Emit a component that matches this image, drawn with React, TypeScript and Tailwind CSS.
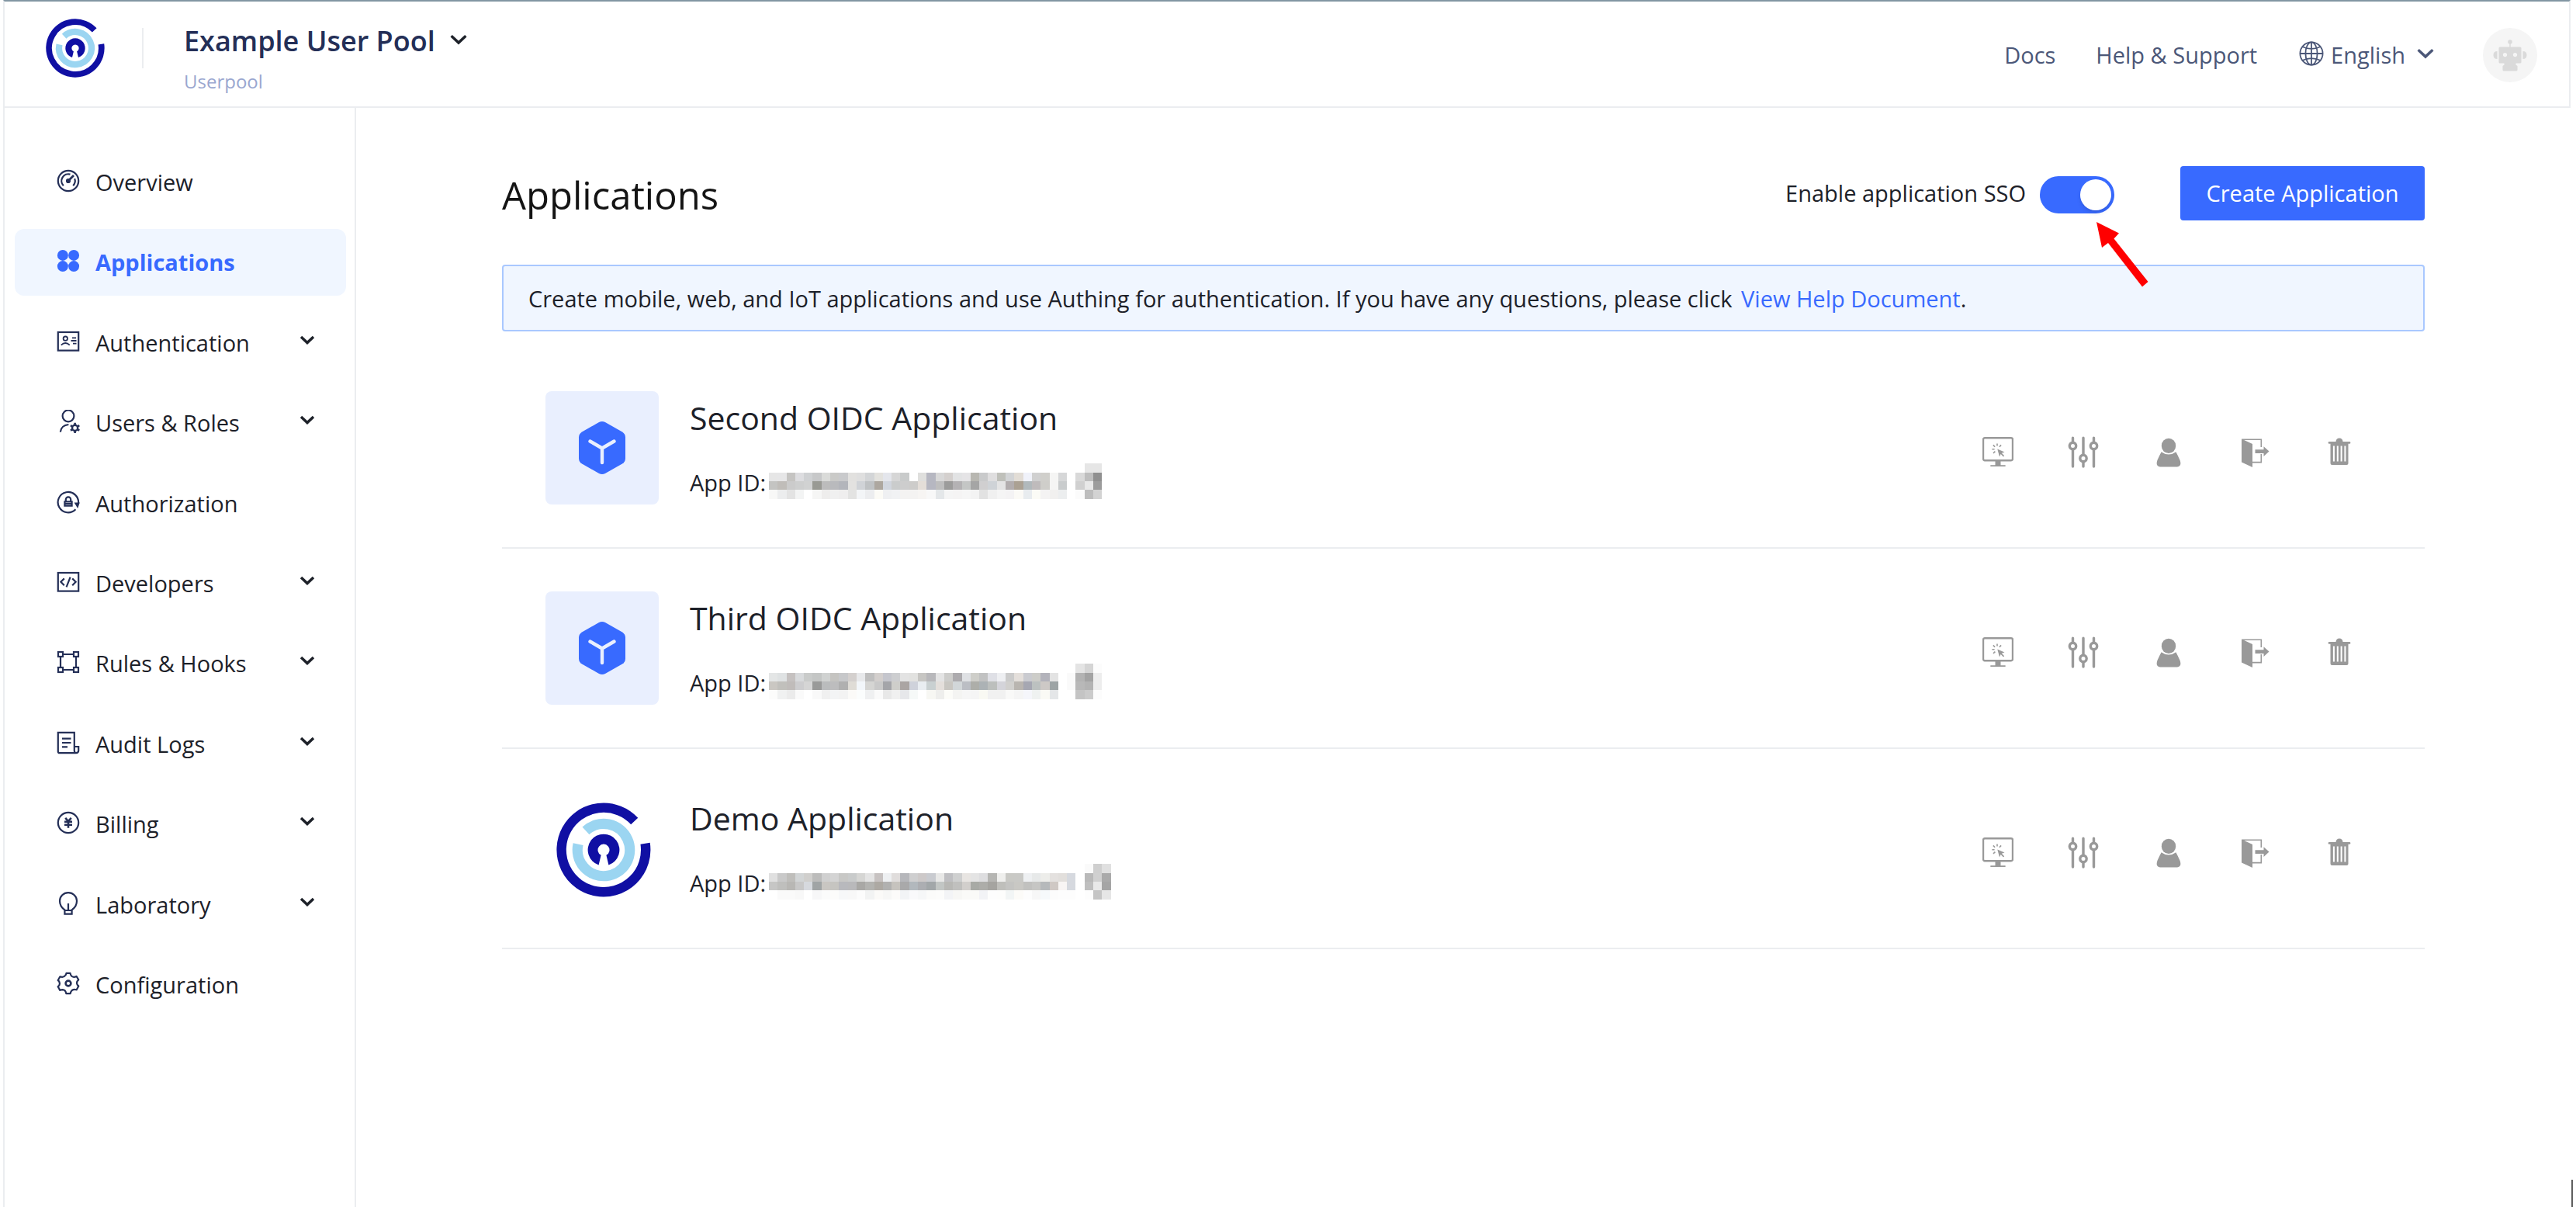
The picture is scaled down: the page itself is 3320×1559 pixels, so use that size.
import React from "react";

type IconProps = { children: React.ReactNode };

function NavIcon({ children }: IconProps) {
  return (
    <svg
      viewBox="0 0 30 30"
      className="size-[30px] shrink-0"
      fill="none"
      stroke="currentColor"
      strokeWidth="2.2"
      aria-hidden="true"
    >
      {children}
    </svg>
  );
}

const navIcons: Record<string, React.ReactNode> = {
  overview: (
    <NavIcon>
      <circle cx="15" cy="15" r="13.2" />
      <path d="M8.8 21.2A8.8 8.8 0 0 1 17.5 6.6" />
      <path d="M23.2 12.2A8.8 8.8 0 0 1 21.2 21.2" />
      <path d="M15 15L22 8" strokeWidth="2.8" />
      <circle cx="15" cy="15" r="2" fill="currentColor" />
    </NavIcon>
  ),
  applications: (
    <NavIcon>
      <g fill="currentColor" stroke="none">
        <circle cx="7.9" cy="7.9" r="7" />
        <circle cx="22.1" cy="7.9" r="7" />
        <circle cx="7.9" cy="22.1" r="7" />
        <circle cx="22.1" cy="22.1" r="7" />
      </g>
    </NavIcon>
  ),
  authentication: (
    <NavIcon>
      <rect x="1.8" y="3" width="26.4" height="23.6" />
      <circle cx="11.3" cy="11.2" r="2.7" strokeWidth="1.8" />
      <path d="M5.8 19.6q5.5-5.2 11 0M20 10.4h5M18.5 14h7M21 17.6h4.5" strokeWidth="1.8" />
    </NavIcon>
  ),
  users: (
    <NavIcon>
      <circle cx="15" cy="7.9" r="7.4" />
      <path d="M4.8 28.6q1-8.6 10.6-9.6" />
      <circle cx="23.6" cy="23.4" r="3.6" strokeWidth="2.4" />
      <g strokeWidth="2.6">
        <path d="M23.6 16.8v3M23.6 27v3M17.9 20.1l2.6 1.5M26.7 25.2l2.6 1.5M17.9 26.7l2.6-1.5M26.7 21.6l2.6-1.5" />
      </g>
    </NavIcon>
  ),
  authorization: (
    <NavIcon>
      <path d="M24.4 24.3A13.2 13.2 0 1 1 28 16.5" />
      <path d="M22.6 15.4h7.2l-2.6 7.6z" fill="currentColor" stroke="none" />
      <path d="M11.8 14v-2.4a3.2 3.2 0 0 1 6.4 0V14M10.4 14.4h9.2v5.2h-9.2zM9.6 17h10.8" />
    </NavIcon>
  ),
  developers: (
    <NavIcon>
      <rect x="1.8" y="3" width="26.4" height="23.6" />
      <path d="M9.8 10.4l-4.4 4.4 4.4 4.4M20.2 10.4l4.4 4.4-4.4 4.4M17.6 8.6l-5 12.8" />
    </NavIcon>
  ),
  rules: (
    <NavIcon>
      <rect x="2" y="2" width="6" height="6" />
      <rect x="22" y="2" width="6" height="6" />
      <rect x="2" y="22" width="6" height="6" />
      <rect x="22" y="22" width="6" height="6" />
      <path d="M8 5h14M8 25h14M5 8v14M25 8v14" />
    </NavIcon>
  ),
  audit: (
    <NavIcon>
      <path d="M22.8 20V1.8H1.8v24.4q0 2 2 2H25q3.2-.2 3.2-3.2V20h-5.4v5q0 3.2 2.2 3.2" />
      <path d="M7 9.6h11.5M7 15h11.5M7 20.4h7" />
    </NavIcon>
  ),
  billing: (
    <NavIcon>
      <circle cx="15" cy="15" r="13.2" />
      <path d="M11.2 8.8L15 13l3.8-4.2M15 12.8v9M10 13.8h10M10 17.8h10" strokeWidth="2.6" />
    </NavIcon>
  ),
  laboratory: (
    <NavIcon>
      <path d="M10.4 28.6v-5.2C6.4 20.6 4 17 4 11.8a11 10.7 0 0 1 22 0c0 5.200-2.400 8.800-6.400 11.600v5.200zM10.4 24h9.200M15 15v9" />
    </NavIcon>
  ),
  configuration: (
    <NavIcon>
      <path
        d="M12.500 1.900h5q.8 4.600 4.600 4.900 1.900 0 3.400-1l2.700 4.600q-3.400 3-1.500 6.400.4.900 1.600 1.700l-2.600 4.800q-5-1.600-7 2-.8 1.200-1 2.800h-5.400q-.8-4.800-4.700-5-1.800 0-3.300.8l-2.600-4.700q3.200-2.400 1.800-5.900-.6-1.400-1.800-2.300l2.700-4.700q4.800 1.600 7-1.800.8-1 1.100-2.600z"
        strokeLinejoin="round"
      />
      <circle cx="15" cy="15" r="3.4" strokeWidth="2.6" />
    </NavIcon>
  ),
};

const navItems = [
  { id: "overview", label: "Overview", open: false },
  { id: "applications", label: "Applications", open: false },
  { id: "authentication", label: "Authentication", open: true },
  { id: "users", label: "Users & Roles", open: true },
  { id: "authorization", label: "Authorization", open: false },
  { id: "developers", label: "Developers", open: true },
  { id: "rules", label: "Rules & Hooks", open: true },
  { id: "audit", label: "Audit Logs", open: true },
  { id: "billing", label: "Billing", open: true },
  { id: "laboratory", label: "Laboratory", open: true },
  { id: "configuration", label: "Configuration", open: false },
];

function Chevron({ className }: { className: string }) {
  return (
    <svg viewBox="0 0 20 12" className={className} fill="none" stroke="currentColor" aria-hidden="true">
      <path d="M2 2l8 7.500 8-7.500" />
    </svg>
  );
}

function Logo({ className }: { className: string }) {
  return (
    <svg viewBox="-61 -61 122 122" className={className} fill="none" aria-hidden="true">
      <path d="M39.700-37A54.300 54.300 0 1 0 53.600-8.200" stroke="#100fa3" strokeWidth="12.400" />
      <path d="M-23-24.600A33.700 33.700 0 1 1-32.900-7.400" stroke="#9bd5f1" strokeWidth="13.200" />
      <path
        d="M-6.400 19.400L-3.400 6.800A7.500 7.500 0 1 1 3.400 6.800L6.400 19.400A20.400 20.400 0 1 0-6.400 19.400z"
        fill="#100fa3"
      />
    </svg>
  );
}

function CubeTile() {
  return (
    <div className="flex size-[146px] items-center justify-center rounded-lg bg-[#e9effe]">
      <svg viewBox="0 0 62 70" className="h-[70px] w-[62px]" aria-hidden="true">
        <path
          d="M27 2Q31 0 35 2L57 14.500Q61 17 61 21.500V48.500Q61 53 57 55.500L35 68Q31 70 27 68L5 55.500Q1 53 1 48.500V21.500Q1 17 5 14.500Z"
          fill="#386aff"
        />
        <path
          d="M15.500 26.500L31 35.500L46.500 26.500M31 35.500V54"
          fill="none"
          stroke="#e9effe"
          strokeWidth="4.400"
          strokeLinecap="round"
          strokeLinejoin="round"
        />
      </svg>
    </div>
  );
}

function LogoTile() {
  return (
    <div className="flex size-[146px] items-center justify-center pl-1 pt-1">
      <Logo className="size-[122px]" />
    </div>
  );
}

/* Masked identifiers: one string per band of cells, "-" is an empty cell. */
function Mosaic({ bands }: { bands: string[] }) {
  const rows = bands.map((b) => b.split(" "));
  const cols = Math.max(...rows.map((r) => r.length));
  return (
    <svg
      viewBox={`0 0 ${cols * 56} 228`}
      className="h-[46px]"
      shapeRendering="crispEdges"
      role="img"
      aria-label="Hidden App ID"
    >
      {rows.map((r, y) =>
        r.map((c, x) =>
          c === "-" ? null : <rect key={`${x}-${y}`} x={x * 56} y={y * 57} width="56" height="57" fill={`#${c}`} />,
        ),
      )}
    </svg>
  );
}

const apps = [
  {
    name: "Second OIDC Application",
    tile: <CubeTile />,
    bands: [
      "- - - - - - - - - - - - - - - - - - - - - - - - - - - - - - - - - - - - e6e6e6 e6e6e6",
      "e6e6e6 e6e6e7 c5c4c2 dddde0 cfd1d3 c7c8c9 dadbd9 cacac8 c9cacc e2e1df dfdfdf d3d5d7 e3e2de e4e6ec d6d6d6 c9cbcb ffffff dfdfdd b6b7c1 d8d8d8 d4d0ce e2e3e4 e5e4e6 b8b7b1 c9cacb dfdedf bfc0ba d2d4d6 e2ddd6 f0f2fa d0d0d0 d0cfcb f5f5f4 d6d7d8 - d9d9d9 bebebe 909090",
      "c4c4c2 c0bdb9 cbcbcb cecfcf d1d2d2 999a94 bcbcbc b9babd b3b5bb e3e2e0 d0d3d7 bfc2c4 ada79f d1d6de cacccc cdcdcd cdccca e4ded8 b6b7c1 bebebe 9c9c9b b4b2b4 c4c6c5 a5a5a5 d0cfd0 cfd3d7 e4e4e4 b2adae aba193 b1b9bc bfbbbc cfceca f5f5f4 c9cccd - d0d0d0 e8e8e8 9c9c9c",
      "f8f8f7 ecedee e3e3e3 f3f4f4 ffffff f6f6f5 eeedec f0f0f0 efeeee e3e3e2 f3f5f7 ecedef fcfbf6 eff0f2 f1f2f4 f4f3f2 f4f3f2 f7f5f3 f8f8f8 e4e7e9 f5f5f5 f5f4f4 f6f6f6 f3f3f3 e2e2e2 f0f0f0 f5f5f5 f4f3f4 fbfaf6 e8ecef fbfbf6 f4f3f3 f1f0ef eceeef - fbfbfb bdbdbd d3d3d3",
    ],
  },
  {
    name: "Third OIDC Application",
    tile: <CubeTile />,
    bands: [
      "- - - - - - - - - - - - - - - - - - - - - - - - - - - - - - - - - - - e4e4e4 d5d5d5 fcfcfc",
      "e4e6e6 dfe2e3 c5c1c0 d8dadc c9cbca c4c6c5 d0d2d1 c5c4c1 c7c8ca d4d0ce e8e9eb bfbfbf d3cfcd c5c6cd cdced0 e3e3e3 e2e2e0 c7c6c3 b8b8bb e4e4e4 cdcdcb adabae dfe1e4 cecec9 c1c2c2 dfe0e6 eeeff2 cbcbcb e4dfdb cacbd0 cdcdc9 b3b3bb e3e3e3 - fafafa b3b3b3 a3a3a3 ededed",
      "cac7c2 c1c0bc c0bcba cdcdcf d5d5d5 999a99 babcbd bdbdbe b0b0b0 dfdcd6 f2f6fa d5d5d3 c9c9c9 a4a5a9 cececa aba5a3 cfd2db e9edf1 c9d0d1 e4dfdb c9c7c2 d2d7d9 bbbec4 adaea9 acb2b5 bcbfbd d4d4da d1d0ce b9b5b0 a6a7b2 bcc1c0 cdc9c6 9da4a5 - fafafa b8b8b8 b3b3b3 ededed",
      "fcfcfb f0f1f1 ebebeb fafafa ffffff f9f9f9 f0f0f0 f3f4f5 f3f3f3 fbfaf8 fbfdfd eff0f1 fafafa e8e8e8 f0f0f0 e6e7ea f6f9f8 ffffff f7f7f3 eeeeec fcfcf8 f4f4f2 f6f6f6 f5f5f5 f9f9f3 f1f1f1 f1f1f1 f9f9f8 f5f5f5 f5f6fb eff2f1 fafaf5 e4e6e8 - ffffff c4c4c4 cbcbcb fcfcfc",
    ],
  },
  {
    name: "Demo Application",
    tile: <LogoTile />,
    bands: [
      "- - - - - - - - - - - - - - - - - - - - - - - - - - - - - - - - - - - - fafafa cfcfcf e0e0e0",
      "e0e0e0 c9c9c9 bfbebb d2d5d6 d0cfcd bcbcbb d0d0d0 d4d4d4 c8c8c6 c9cbcb d6d6d4 e4e4e4 c7c2c1 eef0f2 e0dddc b6b7bb cfcfd0 cdc9c9 c9cbd0 e8e8e7 bfbfc2 cfd0d0 e8e5e2 e4e4e4 dedee0 b6b6b3 efefed c9c9c5 c9c9c6 eef0f2 e7e9e9 ededea e4e1df e2dfdc d6d9df - b9b9b9 d0d0d0 aaaaaa",
      "c6c6c5 bfbfbd b8b7b4 c8c8c8 d6d9de a0a4a5 c9c6c2 c6c5c1 b8b9bd b9b9bb a9a8a5 b3b3b0 ada9a3 b1b1b0 c6c3be a9a9aa b2b8bd acaeb2 a2a7a9 c2c6c4 b8b8b5 c0c0be d2cfcc a8aaa5 adada9 a5a4a0 bfbfbb c4c4c2 c9c8c4 c1c1bf c6c6c4 b6b9bb cfc8c4 f8f5f4 d6d9df - bfbfbf e9e9e9 a5a5a5",
      "ffffff fafafa fafafa f8f8f8 ffffff f7f7f8 fbfbfb fcfcfb f7f8f9 f8f8f8 fcfcfc f2f3f3 fbfaf8 f7f7f6 fcfbfa f2f4f6 f9f9fb f6f7f8 fbfbfa fcfcfb f3f4f6 f7f7f5 fafaf8 fafaf8 f2f3f6 fdfdfd fdfdfc f2f5f5 fcfbf8 fdfdfd f7f7f7 f6f9fb fcfcfc fdfdfd fdfdfd - fdfdfd c5c5c5 e6e6e6",
    ],
  },
];

const rowActions = [
  {
    label: "Experience login",
    art: (
      <>
        <rect x="1" y="2.200" width="38" height="29" rx="2" fill="none" stroke="currentColor" strokeWidth="2.400" />
        <path d="M16.500 32h7v5.200h5.500a.9.9 0 0 1 0 1.800H11a.9.9 0 0 1 0-1.800h5.500z" />
        <path d="M19.300 16.500l9.200 3.900-3.700 1.400 3.400 3.500-1.200 1.100-3.400-3.400-1.600 3.400z" />
        <path
          d="M19 9.400v3.200M13.900 11.400l2.200 2.400M24.100 11.400l-2.200 2.400M12.400 16.800h3.200M14 21.800l2.400-2.200"
          stroke="currentColor"
          strokeWidth="1.600"
        />
      </>
    ),
  },
  {
    label: "Configure",
    art: (
      <g fill="none" stroke="currentColor" strokeWidth="3.400" strokeLinecap="round">
        <circle cx="6.500" cy="12.500" r="4.200" />
        <circle cx="20" cy="28.500" r="4.200" />
        <circle cx="33.500" cy="12.500" r="4.200" />
        <path d="M6.500 2.200v5M6.500 18v21M20 2.200v21M20 33.500v5.500M33.500 2.200v5M33.500 18v21" />
      </g>
    ),
  },
  {
    label: "Access control",
    art: (
      <>
        <ellipse cx="20" cy="12.400" rx="9.200" ry="9.600" />
        <path d="M10.600 20.200q9.400 6.800 18.800 0 2.600 4.800 5.200 10.800 2.600 8-3.600 8.400H9q-6.200-.4-3.600-8.400 2.600-6 5.200-10.800z" />
      </>
    ),
  },
  {
    label: "Sign out",
    art: (
      <>
        <path d="M4 3.400L18 10v30L4 33.600z" />
        <path d="M4.500 4.200h24.800V14M29.300 23v10.600H18" fill="none" stroke="currentColor" strokeWidth="1.600" />
        <path d="M21.500 17.200h11v-4l7 6.400-7 6.400v-4h-11z" />
      </>
    ),
  },
  {
    label: "Delete",
    art: (
      <>
        <path d="M7 7h8.500q.4-4.600 4.500-4.600t4.500 4.600H33a1.400 1.400 0 0 1 0 2.800H7A1.400 1.400 0 0 1 7 7z" />
        <path
          fillRule="evenodd"
          d="M8.500 9h23v26q0 2-2 2h-19q-2 0-2-2zM11.900 12.600v20h2v-20zM16.800 12.600v20h2v-20zM21.600 12.600v20h2v-20zM26.400 12.600v20h2v-20z"
        />
      </>
    ),
  },
];

export default function App() {
  return (
    <div className="relative flex min-h-screen flex-col bg-white pb-1 pl-1 pr-1 font-['Open_Sans','Noto_Sans',sans-serif] text-[29px] leading-10 text-[#1d2129]">
      <header className="mr-[3px] flex h-[139px] items-start border-2 border-[#ebedf0] border-t-[#8296a3] bg-white pl-[53px] pr-[41px]">
        <Logo className="mt-[22px] size-[76px]" />
        <div className="ml-[48px] mt-[34px] h-[52px] w-[2px] bg-[#ebedf0]" />
        <div className="ml-[52px] mt-6">
          <button type="button" className="flex items-center gap-[18px] text-[#242f57]">
            <span className="text-[36px] font-semibold leading-[54px]">Example User Pool</span>
            <Chevron className="mb-1 h-[14px] w-[24px] stroke-3 text-[#1d2129]" />
          </button>
          <p className="text-[24px] leading-[50px] text-[#9aa7d0]">Userpool</p>
        </div>
        <nav aria-label="Help" className="ml-auto mt-[34px] flex h-[70px] items-center text-[#4b5778]">
          <a href="#docs">Docs</a>
          <a href="#help" className="ml-[52px]">
            Help &amp; Support
          </a>
          <button type="button" className="ml-[54px] flex items-center">
            <svg
              viewBox="0 0 32 32"
              className="mb-1 mr-[9px] size-8"
              fill="none"
              stroke="currentColor"
              strokeWidth="1.800"
              aria-hidden="true"
            >
              <circle cx="16" cy="16" r="14.600" />
              <ellipse cx="16" cy="16" rx="7.600" ry="14.600" />
              <path d="M16 1.400v29.200M1.400 16h29.200M4.600 7.200q11.400 5.400 22.800 0M4.600 24.800q11.400-5.400 22.800 0" />
            </svg>
            English
            <Chevron className="mb-1 ml-[14px] h-[14px] w-[24px] stroke-3" />
          </button>
          <button
            type="button"
            aria-label="Account"
            className="ml-[62px] size-[70px] rounded-full bg-[#f5f5f5] text-[#dadada]"
          >
            <svg viewBox="0 0 70 70" className="size-[70px]" fill="currentColor" aria-hidden="true">
              <circle cx="35" cy="18" r="2.800" />
              <rect x="34.300" y="18" width="1.400" height="8" />
              <path
                fillRule="evenodd"
                d="M22 24.500h26a1.500 1.500 0 0 1 1.500 1.500v18a1.500 1.500 0 0 1-1.500 1.500h-5.500v2.500h.500a1.500 1.500 0 0 1 1.500 1.500v4.500a1.500 1.500 0 0 1-1.500 1.500H27a1.500 1.500 0 0 1-1.500-1.500v-4.500a1.500 1.500 0 0 1 1.500-1.500h.500v-2.500H22a1.500 1.500 0 0 1-1.500-1.500V26a1.500 1.500 0 0 1 1.500-1.500zM28.500 32a2.600 2.600 0 1 0 0 5.200 2.600 2.600 0 0 0 0-5.200zM41.500 32a2.600 2.600 0 1 0 0 5.200 2.600 2.600 0 0 0 0-5.200z"
              />
              <path d="M18.500 30v10q-5 0-5-5t5-5zM51.500 30v10q5 0 5-5t-5-5z" />
            </svg>
          </button>
        </nav>
      </header>

      <div className="flex grow">
        <nav aria-label="Main" className="w-[455px] shrink-0 border-x-2 border-[#ebedf0] pb-8 pl-[13px] pr-[11px] pt-[53px]">
          <ul className="flex min-h-[1120px] flex-col justify-between">
            {navItems.map((item) => {
              const active = item.id === "applications";
              return (
                <li key={item.id}>
                  <a
                    href={`#${item.id}`}
                    aria-current={active ? "page" : undefined}
                    className={
                      active
                        ? "flex h-[86px] items-center gap-5 rounded-xl bg-[#f0f6ff] pl-[54px] pr-10 font-bold text-[#386aff]"
                        : "flex h-[86px] items-center gap-5 rounded-xl pl-[54px] pr-10"
                    }
                  >
                    <span className={active ? "mb-1" : "mb-1 text-[#242f57]"}>{navIcons[item.id]}</span>
                    <span className="grow">{item.label}</span>
                    {item.open && <Chevron className="mb-2 h-[12px] w-[20px] stroke-[3.5px]" />}
                  </a>
                </li>
              );
            })}
          </ul>
        </nav>

        <main className="grow pl-[188px] pr-[191px] pt-[75px]">
          <div className="flex items-center">
            <h1 className="grow pt-1 text-[49px] leading-[66px] text-[#141414]">Applications</h1>
            <label htmlFor="sso" className="mr-[18px]">
              Enable application SSO
            </label>
            <input
              id="sso"
              type="checkbox"
              role="switch"
              defaultChecked
              className="relative mt-1 h-12 w-24 appearance-none rounded-full bg-[#bfbfbf] before:absolute before:left-1 before:top-1 before:size-10 before:rounded-full before:bg-white before:shadow-md before:content-[''] checked:bg-[#386aff] checked:before:left-[52px]"
            />
            <button type="button" className="ml-[85px] h-[70px] w-[315px] rounded bg-[#386aff] text-white">
              Create Application
            </button>
          </div>

          <p className="mt-[57px] rounded border-2 border-[#a9c8ff] bg-[#f0f6ff] px-8 pb-5 pt-[22px]">
            Create mobile, web, and IoT applications and use Authing for authentication. If you have any questions,
            please click{" "}
            <a href="#help-document" className="ml-1 text-[#386aff]">
              View Help Document
            </a>
            .
          </p>

          <ul className="mt-[22px]">
            {apps.map((app) => (
              <li key={app.name} className="flex items-start border-b-2 border-[#ebedf0] py-[55px] pl-[56px] pr-[90px]">
                {app.tile}
                <div className="ml-10 mt-1 grow">
                  <h2 className="text-[41px] leading-[60px]">{app.name}</h2>
                  <div className="mt-[29px] flex h-[46px] items-center">
                    <span className="w-[102px] pt-1">App ID:</span>
                    <Mosaic bands={app.bands} />
                  </div>
                </div>
                <div className="mt-[58px] flex items-center gap-[70px] text-[#999999]">
                  {rowActions.map((action) => (
                    <button key={action.label} type="button" aria-label={action.label}>
                      <svg viewBox="0 0 40 42" className="h-[42px] w-10" fill="currentColor" aria-hidden="true">
                        {action.art}
                      </svg>
                    </button>
                  ))}
                </div>
              </li>
            ))}
          </ul>
        </main>
      </div>

      <svg
        viewBox="0 0 68 84"
        className="pointer-events-none absolute right-[551px] top-[286px] h-[84px] w-[68px]"
        fill="#ff0000"
        aria-hidden="true"
      >
        <path d="M1 0L30 14.500L23.500 21.500L67.500 77L60 83.500L16 27L8 33Z" />
      </svg>
      <div className="absolute bottom-1 right-1 h-[35px] w-[2px] bg-[#5f5f5f]" />
    </div>
  );
}
